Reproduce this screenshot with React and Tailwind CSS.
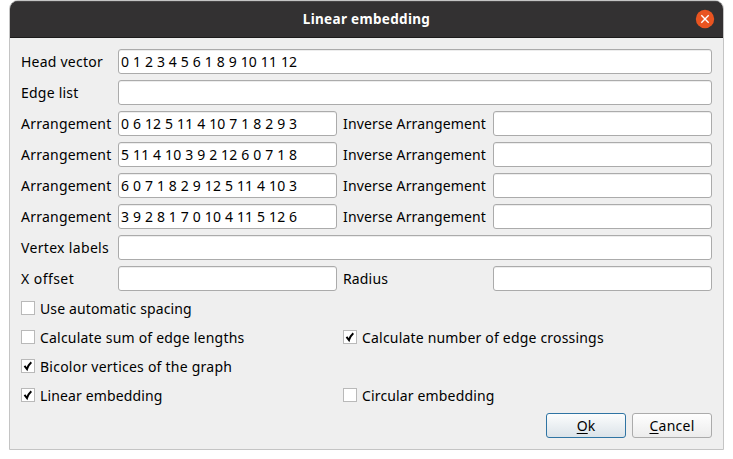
import React from "react";

const arrangements = [
  "0 6 12 5 11 4 10 7 1 8 2 9 3",
  "5 11 4 10 3 9 2 12 6 0 7 1 8",
  "6 0 7 1 8 2 9 12 5 11 4 10 3",
  "3 9 2 8 1 7 0 10 4 11 5 12 6",
];

function Label({ children, className = "" }) {
  return <span className={`whitespace-nowrap leading-[25px] ${className}`}>{children}</span>;
}

function Field({ value = "", wide = false }) {
  return (
    <div
      className={`h-[25px] overflow-hidden rounded-[3px] border border-[#ababab] bg-white pl-[2px] leading-[23px] tracking-[0.16px] whitespace-pre shadow-[inset_0_1px_0_#ededed] ${wide ? "col-span-3" : ""}`}
    >
      {value}
    </div>
  );
}

function Check({ checked = false, children, className = "" }) {
  return (
    <div className="flex h-[23px] items-center gap-[5px]">
      <span className="-mt-px h-[14px] w-[14px] shrink-0 border border-[#b9b9b9] bg-white">
        {checked && (
          <svg viewBox="0 0 12 12" className="block h-3 w-3" fill="none" stroke="#000" strokeWidth="2">
            <path d="M2.5 5.8 L5 9 Q6.2 5 9.3 2.2" />
          </svg>
        )}
      </span>
      <span className={`whitespace-nowrap leading-[23px] ${className}`}>{children}</span>
    </div>
  );
}

export default function App() {
  return (
    <div className="h-[459px] w-[733px] bg-white pl-[9px] font-['Noto_Sans',sans-serif] text-[14px] text-black">
      <div className="h-[450px] w-[715px] overflow-hidden rounded-t-[9px] border border-[#c4c4c4] bg-[#efefef]">
        <header className="relative flex h-[37px] items-center justify-center border-b border-[#1c1b1b] bg-[#333132] pt-px text-white shadow-[inset_0_1px_0_#484647]">
          <h1 className="text-[13.5px] font-bold tracking-[0.32px]">Linear embedding</h1>
          <svg viewBox="0 0 20 20" className="absolute top-[8px] right-[8px] h-5 w-5">
            <circle cx="10" cy="10" r="9.2" fill="#e95420" />
            <path d="M6.3 6.3 L13.7 13.7 M13.7 6.3 L6.3 13.7" stroke="#fff" strokeWidth="1.4" />
          </svg>
        </header>
        <main className="px-[11px] pt-[11px]">
          <div className="grid grid-cols-[91px_219px_144px_219px] gap-[6px]">
            <Label className="tracking-[0.23px]">Head vector</Label>
            <Field wide value="0 1 2 3 4 5 6 1 8 9 10 11 12" />
            <Label className="tracking-[0.22px]">Edge list</Label>
            <Field wide />
            {arrangements.map((value) => (
              <React.Fragment key={value}>
                <Label className="tracking-[0.23px]">Arrangement</Label>
                <Field value={value} />
                <Label className="tracking-[0.14px]">Inverse Arrangement</Label>
                <Field />
              </React.Fragment>
            ))}
            <Label className="tracking-[0.33px]">Vertex labels</Label>
            <Field wide />
            <Label className="tracking-[0.45px]">X offset</Label>
            <Field />
            <Label className="tracking-[0.15px]">Radius</Label>
            <Field />
          </div>
          <div className="mt-[6px] grid grid-cols-[316px_369px] gap-[6px]">
            <Check className="tracking-[0.12px]">Use automatic spacing</Check>
            <span />
            <Check className="tracking-[0.2px]">Calculate sum of edge lengths</Check>
            <Check checked className="tracking-[0.19px]">Calculate number of edge crossings</Check>
            <Check checked className="tracking-[0.24px]">Bicolor vertices of the graph</Check>
            <span />
            <Check checked className="tracking-[0.13px]">Linear embedding</Check>
            <Check className="tracking-[0.15px]">Circular embedding</Check>
          </div>
          <div className="mt-[6px] flex justify-end gap-[6px]">
            <button className="h-[25px] w-20 rounded-[3px] border border-[#2f74a3] bg-linear-to-b from-[#fcfdfd] to-[#dbe3e9] leading-[23px] tracking-[0.1px]">
              <span className="underline decoration-1 underline-offset-2">O</span>k
            </button>
            <button className="h-[25px] w-20 rounded-[3px] border border-[#ababab] bg-linear-to-b from-[#fefefe] to-[#ececec] leading-[23px] tracking-[0.25px]">
              <span className="underline decoration-1 underline-offset-2">C</span>ancel
            </button>
          </div>
        </main>
      </div>
    </div>
  );
}
